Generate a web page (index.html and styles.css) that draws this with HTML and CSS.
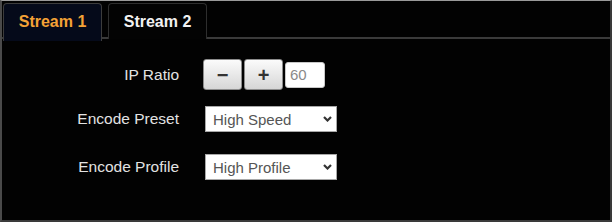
FILE: index.html
```html
<!DOCTYPE html>
<html lang="en">
<head>
    <meta charset="UTF-8">
    <meta name="viewport" content="width=device-width, initial-scale=1.0">
    <title>Stream Settings</title>
    <link rel="stylesheet" href="styles.css">
</head>
<body>
    <div class="panel">
        <ul class="tabs">
            <li class="tab active">Stream 1</li>
            <li class="tab">Stream 2</li>
        </ul>

        <div class="tab-body">
            <div class="row row-ratio">
                <label class="label">IP Ratio</label>
                <div class="stepper">
                    <button class="step-btn">&minus;</button>
                    <button class="step-btn">+</button>
                    <input class="step-input" type="text" value="60">
                </div>
            </div>

            <div class="row row-preset">
                <label class="label">Encode Preset</label>
                <div class="select">
                    <span>High Speed</span>
                    <svg class="chevron" width="9" height="6" viewBox="0 0 9 6"><path d="M1 1l3.5 3.5L8 1" fill="none" stroke="#333" stroke-width="2.2"/></svg>
                </div>
            </div>

            <div class="row">
                <label class="label">Encode Profile</label>
                <div class="select">
                    <span>High Profile</span>
                    <svg class="chevron" width="9" height="6" viewBox="0 0 9 6"><path d="M1 1l3.5 3.5L8 1" fill="none" stroke="#333" stroke-width="2.2"/></svg>
                </div>
            </div>
        </div>
    </div>
</body>
</html>
```

FILE: styles.css
```css
* {
    margin: 0;
    padding: 0;
    box-sizing: border-box;
}

body {
    font-family: "Liberation Sans", Arial, sans-serif;
    background: #000;
    width: 612px;
    height: 222px;
    overflow: hidden;
}

.panel {
    height: 222px;
    background: #020202;
    border-top: 1px solid #9a9a9a;
    border-left: 2px solid #4a4a4a;
    border-right: 2px solid #3a3a3a;
    border-bottom: 2px solid #3a3a3a;
}

.tabs {
    list-style: none;
    display: flex;
    gap: 6px;
    padding: 2px 0 0 1px;
    border-bottom: 2px solid #3a3a3a;
    height: 38px;
}

.tab {
    width: 99px;
    height: 36px;
    padding-top: 9px;
    text-align: center;
    font-size: 16px;
    font-weight: 700;
    color: #f2f2f2;
    background: #030303;
    border: 1px solid #2e2e2e;
    border-bottom: none;
    border-radius: 4px 4px 0 0;
}

.tab.active {
    color: #f4a236;
    background: #050a1a;
    border-color: #3c3c3c;
    height: 38px;
    margin-bottom: -2px;
}

.tab-body {
    padding-top: 20px;
}

.row {
    display: flex;
    align-items: center;
    gap: 24px;
}

.row-ratio {
    margin-bottom: 16px;
}

.row-preset {
    margin-bottom: 22px;
}

.label {
    width: 177px;
    text-align: right;
    font-size: 15.5px;
    color: #e2e2e2;
}

.stepper {
    display: flex;
    align-items: center;
    gap: 2px;
}

.step-btn {
    width: 39px;
    height: 31px;
    border: 1px solid #8c8c8c;
    border-radius: 3px;
    background: linear-gradient(#fbfbfb, #d6d6d6);
    font-family: "Liberation Sans", Arial, sans-serif;
    font-size: 20px;
    font-weight: 700;
    color: #333;
    line-height: 1;
}

.step-input {
    width: 40px;
    height: 26px;
    border: 1px solid #c8c8c8;
    border-radius: 3px;
    padding-left: 4px;
    font-family: "Liberation Sans", Arial, sans-serif;
    font-size: 15px;
    color: #8a8a8a;
    background: #fff;
}

.select {
    margin-left: 2px;
    width: 132px;
    height: 26px;
    display: flex;
    align-items: center;
    justify-content: space-between;
    padding: 0 4px 0 7px;
    background: #fff;
    border: 1px solid #a8a8a8;
    font-size: 15px;
    color: #555;
}
```
